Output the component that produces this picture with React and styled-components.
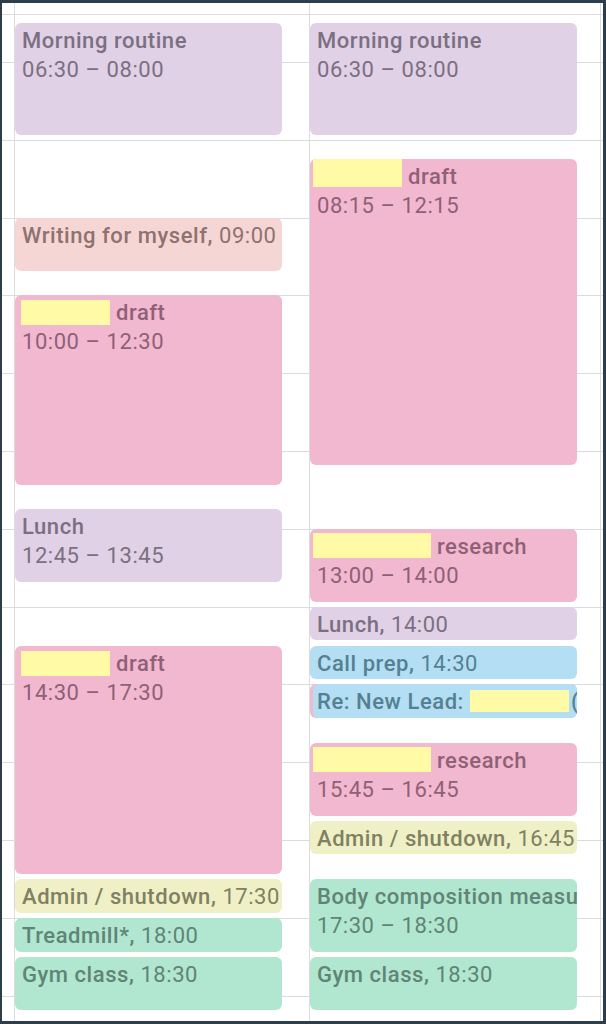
import styled, { createGlobalStyle } from "styled-components";

const HOUR = 77.8;
const DAY_START = 7 * 60;
const FIRST_LINE = 47; // 07:00 line, from the top of the grid body

const COLORS = {
   lavender: { bg: "#e0d1e6", text: "#7c6f82" },
   pink: { bg: "#f2b8d0", text: "#8e6176" },
   peach: { bg: "#f6d6d4", text: "#8e7270" },
   banana: { bg: "#eff0c6", text: "#808062" },
   sage: { bg: "#b1e6d0", text: "#608475" },
   sky: { bg: "#b3def3", text: "#568092" },
};

const GlobalStyle = createGlobalStyle`
   html, body {
      margin: 0;
      padding: 0;
      background: #ffffff;
   }
   body {
      font-family: Roboto, "Liberation Sans", sans-serif;
   }
`

const Frame = styled.div`
   width: 606px;
   height: 1024px;
   box-sizing: border-box;
   border-style: solid;
   border-color: #2c3d4c;
   border-width: 3px 3px 3px 2px;
   background: #ffffff;
   display: flex;
   flex-direction: column;
   overflow: hidden;
`

const Header = styled.div`
   height: 11px;
   flex: none;
   border-bottom: 1px solid #dcdcdc;
   display: grid;
   grid-template-columns: 12px 295px 291px 3px;

   div + div {
      border-left: 1px solid #dcdcdc;
   }
`

const Body = styled.div`
   flex: 1;
   display: grid;
   grid-template-columns: 12px 295px 291px 3px;
   background-image: repeating-linear-gradient(
      to bottom,
      #dcdcdc 0,
      #dcdcdc 1px,
      transparent 1px,
      transparent ${HOUR}px
   );
   background-position: 0 ${FIRST_LINE}px;
   background-repeat: no-repeat;
   background-size: 100% 100%;
`

const Gutter = styled.div`
   grid-row: 1;
`

const Column = styled.div`
   grid-row: 1;
   position: relative;
   border-left: 1px solid #dcdcdc;
`

const EventBox = styled.div`
   position: absolute;
   left: ${p => p.$inset || 0}px;
   width: ${p => 267 - (p.$inset || 0)}px;
   box-sizing: border-box;
   padding: 3px 0 0 ${p => (p.$inset ? 4 : 7)}px;
   border-radius: 6px;
   background: ${p => COLORS[p.$color].bg};
   color: ${p => COLORS[p.$color].text};
   font-size: 22px;
   line-height: 29px;
   letter-spacing: 0.55px;
   white-space: nowrap;
   overflow: hidden;
`

const Title = styled.div`
   font-weight: 500;
`

const Time = styled.span`
   font-weight: 400;
`

const Redacted = styled.span`
   display: inline-block;
   vertical-align: top;
   width: ${p => p.$w}px;
   height: ${p => p.$h}px;
   margin: ${p => p.$t - 3}px ${p => p.$mr ?? 6}px 0 ${p => p.$ml}px;
   background: #fffaa6;
`

const Edge = styled.div`
   grid-row: 1;
   border-left: 1px solid #dcdcdc;
`

const toY = (h, m) => FIRST_LINE + ((h * 60 + m - DAY_START) * HOUR) / 60;
const fmt = ([h, m]) => `${String(h).padStart(2, "0")}:${String(m).padStart(2, "0")}`;

function CalEvent({ start, end, color, title, inline, redact, inset }) {
   const top = toY(...start);
   const height = toY(...end) - top - 5;
   const head = (
      <>
         {redact && <Redacted $w={redact.w} $h={redact.h} $t={redact.t} $ml={redact.ml} />}
         {title}
      </>
   );
   let content = null;
   if (inline) {
      content = (
         <Title>
            {head}, <Time>{fmt(start)}</Time>
         </Title>
      );
   } else if (title) {
      content = (
         <>
            <Title>{head}</Title>
            <div>{fmt(start)} – {fmt(end)}</div>
         </>
      );
   }
   return (
      <EventBox $color={color} $inset={inset} style={{ top, height }}>
         {content}
      </EventBox>
   );
}

function LeadEvent({ start, end }) {
   const top = toY(...start);
   const height = toY(...end) - top - 5;
   return (
      <EventBox $color="sky" $inset={3} style={{ top, height }}>
         <Title>
            Re: New Lead: <Redacted $w={99} $h={22} $t={6} $ml={0} $mr={2} />(
         </Title>
      </EventBox>
   );
}

const leftDay = [
   { start: [6, 30], end: [8, 0], color: "lavender", title: "Morning routine" },
   { start: [9, 0], end: [9, 45], color: "peach", title: "Writing for myself", inline: true },
   { start: [10, 0], end: [12, 30], color: "pink", title: "draft", redact: { w: 89, h: 25, t: 5, ml: -1 } },
   { start: [12, 45], end: [13, 45], color: "lavender", title: "Lunch" },
   { start: [14, 30], end: [17, 30], color: "pink", title: "draft", redact: { w: 89, h: 25, t: 5, ml: -1 } },
   { start: [17, 30], end: [18, 0], color: "banana", title: "Admin / shutdown", inline: true },
   { start: [18, 0], end: [18, 30], color: "sage", title: "Treadmill*", inline: true },
   { start: [18, 30], end: [19, 15], color: "sage", title: "Gym class", inline: true },
];

const rightDay = [
   { start: [6, 30], end: [8, 0], color: "lavender", title: "Morning routine" },
   { start: [8, 15], end: [12, 15], color: "pink", title: "draft", redact: { w: 89, h: 28, t: 0, ml: -4 } },
   { start: [13, 0], end: [14, 0], color: "pink", title: "research", redact: { w: 118, h: 25, t: 4, ml: -4 } },
   { start: [14, 0], end: [14, 30], color: "lavender", title: "Lunch", inline: true },
   { start: [14, 30], end: [15, 0], color: "sky", title: "Call prep", inline: true },
   { start: [15, 0], end: [15, 30], color: "pink", title: "" },
   { start: [15, 0], end: [15, 30], lead: true },
   { start: [15, 45], end: [16, 45], color: "pink", title: "research", redact: { w: 118, h: 25, t: 4, ml: -4 } },
   { start: [16, 45], end: [17, 15], color: "banana", title: "Admin / shutdown", inline: true },
   { start: [17, 30], end: [18, 30], color: "sage", title: "Body composition measurement" },
   { start: [18, 30], end: [19, 15], color: "sage", title: "Gym class", inline: true },
];

const renderDay = list =>
   list.map((ev, i) => (ev.lead ? <LeadEvent key={i} {...ev} /> : <CalEvent key={i} {...ev} />));

export default function App() {
   return (
      <>
         <GlobalStyle />
         <Frame>
            <Header>
               <div />
               <div />
               <div />
               <div />
            </Header>
            <Body>
               <Gutter />
               <Column>{renderDay(leftDay)}</Column>
               <Column>{renderDay(rightDay)}</Column>
               <Edge />
            </Body>
         </Frame>
      </>
   );
}
